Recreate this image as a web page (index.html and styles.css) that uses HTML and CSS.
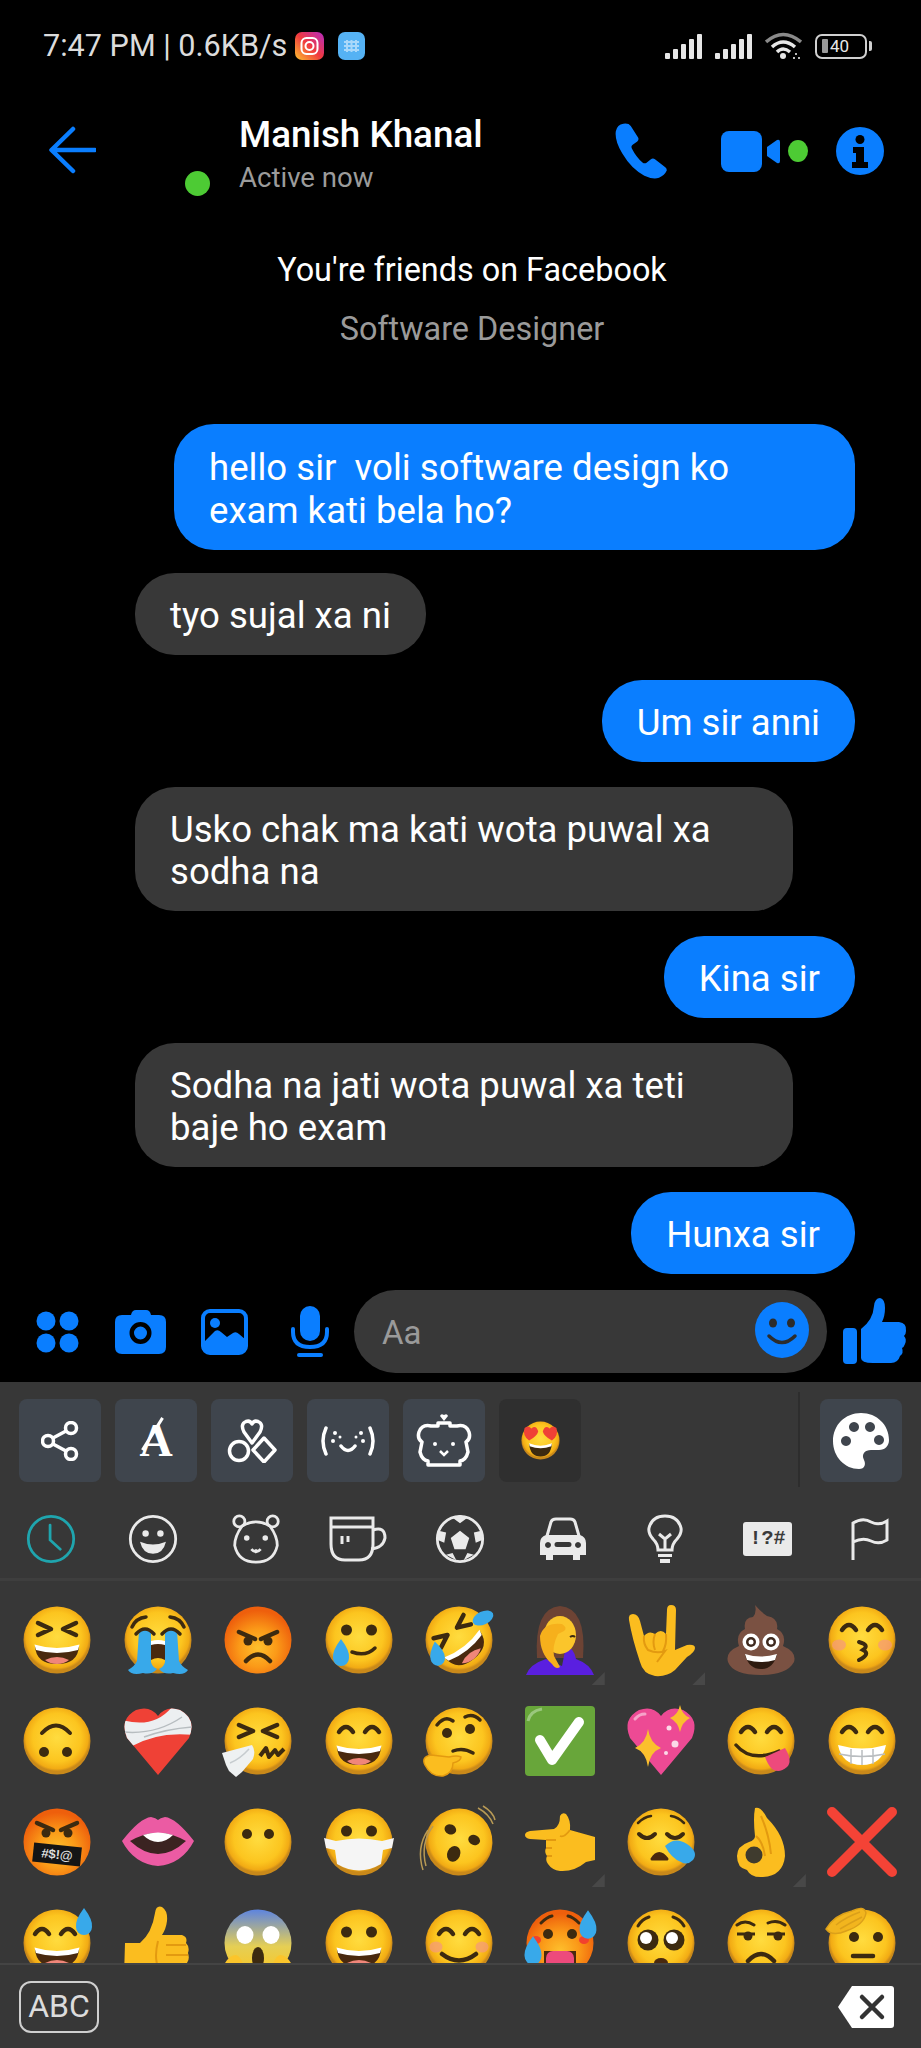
FILE: index.html
```html
<!DOCTYPE html>
<html lang="en">
<head>
<meta charset="utf-8">
<title>Messenger chat</title>
<link rel="stylesheet" href="styles.css">
</head>
<body>
<svg class="defs" aria-hidden="true">
  <defs>
    <radialGradient id="y" cx="50%" cy="45%" r="50%"><stop offset="0" stop-color="#ffdc3f"/><stop offset=".72" stop-color="#fcc51f"/><stop offset=".93" stop-color="#f2ab14"/><stop offset="1" stop-color="#c9891a"/></radialGradient>
    <radialGradient id="o" cx="50%" cy="62%" r="56%"><stop offset="0" stop-color="#fdc02d"/><stop offset=".5" stop-color="#fb9a18"/><stop offset="1" stop-color="#ee5f0c"/></radialGradient>
    <linearGradient id="sc" x1="0" y1="0" x2="0" y2="1"><stop offset="0" stop-color="#5d84e0"/><stop offset=".55" stop-color="#e5cf55"/><stop offset="1" stop-color="#fcc51f"/></linearGradient>
    <linearGradient id="ig" x1="0" y1="1" x2="1" y2="0"><stop offset="0" stop-color="#fdc12e"/><stop offset=".5" stop-color="#f0393f"/><stop offset="1" stop-color="#b52bc4"/></linearGradient>
    <clipPath id="hc"><path d="M36 70 L5 33 Q-3 14 14 5 Q28 0 36 11 Q44 0 58 5 Q75 14 67 33Z"/></clipPath>
    <g id="f"><circle cx="36" cy="36" r="33.5" fill="url(#y)"/></g>
    <g id="fo"><circle cx="36" cy="36" r="33.5" fill="url(#o)"/></g>
    <g id="m"><path d="M14 42 Q36 49 58 42 Q57 60 36 60 Q15 60 14 42Z" fill="#49290f"/><path d="M13.5 40.500 Q36 47.500 58.500 40.500 L57 46 Q36 52 15 46Z" fill="#fff"/><path d="M24 56 Q36 50 48 56 Q43 60 36 60 Q29 60 24 56Z" fill="#f0867a"/></g>
    <g id="ae" fill="none" stroke="#3c2a10" stroke-width="4.500" stroke-linecap="round"><path d="M16 27 Q23 17 30 27"/><path d="M42 27 Q49 17 56 27"/></g>
    <g id="de" fill="#3c2a10"><circle cx="23.500" cy="25" r="5.500"/><circle cx="48.500" cy="25" r="5.500"/></g>
    <path id="drop" d="M0 -14 Q9 -2 8 5 A8 8 0 0 1 -8 5 Q-9 -2 0 -14Z" fill="#38a9ea"/>
  </defs>
</svg>

<div class="phone">
  <div class="status">
    <span class="clock-text">7:47 PM | 0.6KB/s</span>
    <svg class="s-insta" viewBox="0 0 29 28"><rect width="29" height="28" rx="7" fill="url(#ig)"/><rect x="6.500" y="6" width="16" height="16" rx="5" fill="none" stroke="#fff" stroke-width="2"/><circle cx="14.500" cy="14" r="4" fill="none" stroke="#fff" stroke-width="2"/></svg>
    <svg class="s-keys" viewBox="0 0 27 28"><rect width="27" height="28" rx="7" fill="#55b2f4"/><path d="M6 10h15M6 14h15M6 18h15M9 8v12M13.500 8v12M18 8v12" stroke="#a9d8fa" stroke-width="2"/></svg>
    <div class="s-right">
      <svg class="s-sig" viewBox="0 0 38 25"><rect x="0" y="19" width="5" height="6" rx="1" fill="#e6e6e6"/><rect x="8" y="15" width="5" height="10" rx="1" fill="#e6e6e6"/><rect x="16" y="10" width="5" height="15" rx="1" fill="#e6e6e6"/><rect x="24" y="5" width="5" height="20" rx="1" fill="#e6e6e6"/><rect x="32" y="0" width="5" height="25" rx="1" fill="#e6e6e6"/></svg>
      <svg class="s-sig" viewBox="0 0 38 25"><rect x="0" y="19" width="5" height="6" rx="1" fill="#e6e6e6"/><rect x="8" y="15" width="5" height="10" rx="1" fill="#e6e6e6"/><rect x="16" y="10" width="5" height="15" rx="1" fill="#e6e6e6"/><rect x="24" y="5" width="5" height="20" rx="1" fill="#e6e6e6"/><rect x="32" y="0" width="5" height="25" rx="1" fill="#e6e6e6"/></svg>
      <svg class="s-wifi" viewBox="0 0 37 28"><path d="M1 10 Q18 -5 36 10" fill="none" stroke="#8a8a8a" stroke-width="3.500"/><path d="M7 15 Q18 5 30 15" fill="none" stroke="#e6e6e6" stroke-width="3.500"/><path d="M12 20 Q18 14 25 20" fill="none" stroke="#e6e6e6" stroke-width="3.500"/><circle cx="18" cy="24" r="3" fill="#e6e6e6"/><path d="M28 26h2M33 26h2M30 22h2" stroke="#bbb" stroke-width="2"/></svg>
      <div class="s-batt"><div class="s-cell"><span class="s-fill"></span><span class="s-num">40</span></div><span class="s-nub"></span></div>
    </div>
  </div>

  <div class="header">
    <svg class="back" viewBox="0 0 48 48"><path d="M47 24H4M25 3 3.500 24 25 45" fill="none" stroke="#0a7eff" stroke-width="4.500" stroke-linecap="round" stroke-linejoin="round"/></svg>
    <div class="avatar"><span class="avatar-dot"></span></div>
    <div class="who">
      <div class="name">Manish Khanal</div>
      <div class="active">Active now</div>
    </div>
    <div class="actions">
      <svg class="call" viewBox="3.500 1 19.500 22" preserveAspectRatio="none"><path fill="#0a7eff" d="M6.600 1.300 Q4.300 1.700 3.800 4.200 Q3.300 8 6.200 13 Q9.500 19 14.300 21.700 Q17.500 23.300 19.700 22.500 Q21.800 21.500 22.500 19.800 Q22.700 19 22 18.400 L18.200 15.200 Q17.400 14.700 16.600 15.300 L15 16.700 Q14.300 17.100 13.600 16.500 Q11.300 14.400 9.700 11 Q9.300 10 10 9.500 L11.700 8.300 Q12.400 7.600 12 6.700 L9.300 2.200 Q8.500 1 6.600 1.300Z"/></svg>
      <svg class="video" viewBox="0 0 59 41"><rect x="0" y="0" width="41" height="41" rx="8" fill="#0a7eff"/><path d="M46 16 L56 9 Q59 8 59 11 V30 Q59 33 56 32 L46 25Z" fill="#0a7eff"/></svg>
      <span class="call-dot"></span>
      <svg class="info" viewBox="0 0 48 48"><circle cx="24" cy="24" r="24" fill="#0a7eff"/><circle cx="24" cy="12.500" r="4.500" fill="#000"/><path d="M17 20h11v15h4v6H16v-6h4V26h-3Z" fill="#000"/></svg>
    </div>
  </div>

  <div class="intro">
    <div class="friends">You're friends on Facebook</div>
    <div class="job">Software Designer</div>
  </div>

  <div class="thread">
    <div class="bubble me wide">hello sir&nbsp; voli software design ko<br>exam kati bela ho?</div>
    <div class="bubble them">tyo sujal xa ni</div>
    <div class="bubble me">Um sir anni</div>
    <div class="bubble them wide2">Usko chak ma kati wota puwal xa sodha na</div>
    <div class="bubble me">Kina sir</div>
    <div class="bubble them wide2">Sodha na jati wota puwal xa teti baje ho exam</div>
    <div class="bubble me">Hunxa sir</div>
  </div>

  <div class="composer">
    <svg class="c-grid" viewBox="0 0 43 42"><circle cx="10" cy="10" r="9.500" fill="#0a7eff"/><circle cx="33" cy="10" r="9.500" fill="#0a7eff"/><circle cx="10" cy="32" r="9.500" fill="#0a7eff"/><circle cx="33" cy="32" r="9.500" fill="#0a7eff"/></svg>
    <svg class="c-cam" viewBox="0 0 51 44"><path fill="#0a7eff" fill-rule="evenodd" d="M16 5 Q17 0 21 0H31Q35 0 36 5H44Q51 5 51 12V37Q51 44 44 44H7Q0 44 0 37V12Q0 5 7 5ZM25.500 12A11 11 0 1 0 25.500 34A11 11 0 1 0 25.500 12ZM25.500 16.500A6.500 6.500 0 1 1 25.500 29.500A6.500 6.500 0 1 1 25.500 16.500Z"/></svg>
    <svg class="c-img" viewBox="0 0 47 46"><rect x="2" y="2" width="43" height="42" rx="7" fill="none" stroke="#0a7eff" stroke-width="4"/><circle cx="14" cy="14" r="5" fill="#0a7eff"/><path d="M2 34 L14 22 Q17 20 20 23 L26 28 L32 24 Q35 22 38 25 L45 31 V38 Q45 44 39 44 H8 Q2 44 2 38Z" fill="#0a7eff"/></svg>
    <svg class="c-mic" viewBox="0 0 38 51"><rect x="9" y="0" width="20" height="35" rx="10" fill="#0a7eff"/><path d="M2 23 V26 Q2 41 19 41 Q36 41 36 26 V23" fill="none" stroke="#0a7eff" stroke-width="4" stroke-linecap="round"/><path d="M8 49h22" stroke="#0a7eff" stroke-width="4" stroke-linecap="round"/></svg>
    <div class="pill">
      <span class="aa">Aa</span>
      <svg class="c-smile" viewBox="0 0 54 56"><ellipse cx="27" cy="28" rx="27" ry="28" fill="#0a7eff"/><ellipse cx="18" cy="21" rx="4" ry="4.500" fill="#2c2c2c"/><ellipse cx="36" cy="21" rx="4" ry="4.500" fill="#2c2c2c"/><path d="M14 34 Q27 47 40 34" fill="none" stroke="#2c2c2c" stroke-width="3.500" stroke-linecap="round"/></svg>
    </div>
    <svg class="c-thumb" viewBox="0 0 64 66"><rect x="0" y="30" width="14" height="36" rx="4" fill="#0a7eff"/><path fill="#0a7eff" d="M18 31 Q30 22 31 8 Q32 0 37 0 Q42 1 42 10 Q42 18 39 24 H56 Q64 25 63 33 Q63 36 61 38 Q64 41 62 46 Q61 49 59 50 Q61 55 57 58 Q55 65 48 65 H30 Q18 65 18 60Z"/></svg>
  </div>

  <div class="keyboard">
    <div class="toolbar">
      <div class="tile"><svg class="t-share" viewBox="0 0 38 40"><g fill="none" stroke="#fff" stroke-width="3.500"><circle cx="30" cy="7" r="5.500"/><circle cx="7" cy="20" r="5.500"/><circle cx="30" cy="33" r="5.500"/><path d="M12 17 25 10M12 23 25 30"/></g></svg></div>
      <div class="tile"><span class="t-a">A</span></div>
      <div class="tile"><svg class="t-knot" viewBox="0 0 50 44"><g fill="none" stroke="#fff" stroke-width="3.500" stroke-linejoin="round"><path d="M25 24 L17 13 Q13 5 19 2.500 Q23 1 25 5 Q27 1 31 2.500 Q37 5 33 13Z"/><circle cx="12" cy="32" r="9.500"/><path d="M37 19 48 31 37 43 26 31Z"/></g></svg></div>
      <div class="tile"><svg class="t-kao" viewBox="0 0 56 30"><g fill="none" stroke="#fff" stroke-width="3.500" stroke-linecap="round"><path d="M6 2 Q0 15 6 28M50 2 Q56 15 50 28M21 20 Q28 29 35 20"/></g><g fill="#fff"><circle cx="15" cy="7" r="2"/><circle cx="13" cy="15" r="2"/><circle cx="41" cy="7" r="2"/><circle cx="43" cy="15" r="2"/><circle cx="20" cy="11" r="1.500"/><circle cx="36" cy="11" r="1.500"/></g></svg></div>
      <div class="tile"><svg class="t-bear" viewBox="0 0 56 58"><g fill="none" stroke="#fff" stroke-width="3.500" stroke-linejoin="round"><path d="M15 14 H22 V11 H34 V14 H41 Q50 12 53 20 Q55 27 50 30 L52 40 Q50 48 44 49 V53 H12 V49 Q6 48 4 40 L6 30 Q1 27 3 20 Q6 12 15 14Z"/></g><path d="M28 9 L24 4 Q25 1 28 3 Q31 1 32 4Z" fill="#fff"/><g fill="#fff"><circle cx="19" cy="32" r="2"/><circle cx="37" cy="32" r="2"/></g><path d="M24 39 28 43 32 39" fill="none" stroke="#fff" stroke-width="2.500"/></svg></div>
      <div class="tile tile-dark"><svg class="em-small" viewBox="0 0 72 72"><use href="#f"/><path d="M12 14 Q18 8 24 15 Q32 8 36 20 Q34 28 20 36 Q8 28 12 14Z" fill="#ef4136" transform="translate(-4,0)"/><path d="M60 14 Q54 8 48 15 Q40 8 36 20 Q38 28 52 36 Q64 28 60 14Z" fill="#ef4136" transform="translate(4,0)"/><path d="M16 42 Q36 50 56 42 Q54 64 36 64 Q18 64 16 42Z" fill="#3c2a10"/><path d="M16 41 Q36 49 56 41 L55 46 Q36 53 17 46Z" fill="#fff"/></svg></div>
      <div class="divider"></div>
      <div class="tile"><svg class="t-pal" viewBox="0 0 56 56"><path fill="#fff" fill-rule="evenodd" d="M28 0 C12 0 0 12 0 28 C0 44 12 56 26 56 C32 56 33 51 31 47 C28 41 32 37 38 37 H46 C52 37 56 33 56 27 C56 12 44 0 28 0ZM13 23a5 5 0 1 0 .01 0ZM21 9a5 5 0 1 0 .01 0ZM37 9a5 5 0 1 0 .01 0ZM46 22a5 5 0 1 0 .01 0Z"/></svg></div>
    </div>

    <div class="cats">
      <svg class="cat" viewBox="0 0 54 54"><g fill="none" stroke="#1fa5ae" stroke-width="3"><circle cx="27" cy="27" r="24.500"/><path d="M26 12V28L37 38" stroke-linecap="round"/></g></svg>
      <svg class="cat" viewBox="0 0 54 54"><g fill="none" stroke="#eaeaea" stroke-width="3"><circle cx="27" cy="27" r="24.500"/></g><circle cx="19" cy="21" r="3.500" fill="#eaeaea"/><circle cx="35" cy="21" r="3.500" fill="#eaeaea"/><path d="M13 30 Q27 36 41 30 Q38 43 27 43 Q16 43 13 30Z" fill="#eaeaea"/></svg>
      <svg class="cat" viewBox="0 0 54 54"><g fill="none" stroke="#eaeaea" stroke-width="3"><circle cx="9" cy="8" r="6"/><circle cx="45" cy="8" r="6"/><path d="M12 13 Q27 4 42 13 Q50 24 50 34 Q46 52 27 52 Q8 52 4 34 Q4 24 12 13Z"/><path d="M22 38 Q27 44 32 38M27 38v3"/></g><circle cx="17" cy="26" r="3" fill="#eaeaea"/><circle cx="37" cy="26" r="3" fill="#eaeaea"/></svg>
      <svg class="cat-cup" viewBox="0 0 58 46"><g fill="none" stroke="#eaeaea" stroke-width="3"><path d="M2 2H44V28Q44 44 30 44H16Q2 44 2 28Z"/><path d="M2 11H44M44 14 Q56 10 56 22 Q54 32 42 33M13 20V28M19 20V26"/></g></svg>
      <svg class="cat" viewBox="0 0 54 54"><circle cx="27" cy="27" r="24.500" fill="none" stroke="#eaeaea" stroke-width="3"/><path fill="#eaeaea" d="M27 18 37 26 33 38H21L17 26ZM19 4 27 10 35 4 27 1ZM4 18 12 20 10 31 3 28ZM50 18 42 20 44 31 51 28ZM12 44 19 42 23 50ZM42 44 35 42 31 50Z"/></svg>
      <svg class="cat-car" viewBox="0 0 48 44"><path fill="none" stroke="#eaeaea" stroke-width="3" d="M8 19 L12 5 Q13 2 17 2H31Q35 2 36 5L40 19"/><path fill="#eaeaea" fill-rule="evenodd" d="M7 18H41Q47 20 47 26V38H41V43H34V38H14V43H7V38H1V26Q1 20 7 18ZM9 25a3 3 0 1 0 .01 0ZM39 25a3 3 0 1 0 .01 0ZM18 25a2 2 0 0 0 0 5H30a2 2 0 0 0 0-5Z"/></svg>
      <svg class="cat-bulb" viewBox="0 0 36 50"><g fill="none" stroke="#eaeaea" stroke-width="3"><path d="M11 36 Q11 30 6 25 Q1 19 2 14 Q5 2 18 2 Q31 2 34 14 Q35 19 30 25 Q25 30 25 36Z"/><path d="M12 20 18 25 24 20M18 25V36"/></g><rect x="11" y="40" width="14" height="3" fill="#eaeaea"/><rect x="13" y="45" width="10" height="4" fill="#eaeaea"/></svg>
      <span class="cat-tag">!?#</span>
      <svg class="cat-flag" viewBox="0 0 38 42"><path fill="none" stroke="#eaeaea" stroke-width="3" d="M2 42V5 Q12 -1 20 4 Q28 8 36 3 V22 Q28 27 20 23 Q12 19 2 24"/></svg>
    </div>

    <div class="emoji-grid">
      <!-- row 1 -->
      <div class="cell"><svg class="em" viewBox="0 0 72 72"><use href="#f"/><path d="M17 19 30 25 17 31M55 19 42 25 55 31" fill="none" stroke="#3c2a10" stroke-width="4.500" stroke-linecap="round" stroke-linejoin="round"/><use href="#m"/></svg></div>
      <div class="cell"><svg class="em" viewBox="0 0 72 72"><use href="#f"/><path d="M10 23 Q14 14 24 13M62 23 Q58 14 48 13" fill="none" stroke="#3c2a10" stroke-width="3.500" stroke-linecap="round"/><path id="tr" d="M17 27 Q23 23 29 27 L29 58 Q30 63 35 65 Q30 71 21 69 Q10 72 6 66 Q13 62 15 57Z" fill="#38a9ea"/><use href="#tr" transform="translate(72,0) scale(-1,1)"/><path d="M14 30 Q23 20 32 30M58 30 Q49 20 40 30" fill="none" stroke="#3c2a10" stroke-width="3.500" stroke-linecap="round"/><path d="M29 38 Q36 36 43 38 V56 Q36 52 29 56Z" fill="#49290f"/><path d="M29 37 Q36 35 43 37 V41 Q36 39 29 41Z" fill="#fff"/></svg></div>
      <div class="cell"><svg class="em" viewBox="0 0 72 72"><use href="#fo"/><path d="M17 28 33 35M55 28 39 35" stroke="#3c2a10" stroke-width="4.500" stroke-linecap="round"/><circle cx="26" cy="37" r="4.500" fill="#3c2a10"/><circle cx="46" cy="37" r="4.500" fill="#3c2a10"/><path d="M24 57 Q36 44 48 57" fill="none" stroke="#3c2a10" stroke-width="4.500" stroke-linecap="round"/></svg></div>
      <div class="cell"><svg class="em" viewBox="0 0 72 72"><use href="#f"/><use href="#de" transform="translate(0,1)"/><path d="M29 48 Q43 53 52 44" fill="none" stroke="#3c2a10" stroke-width="3.500" stroke-linecap="round"/><use href="#drop" transform="translate(18,49)"/></svg></div>
      <div class="cell"><svg class="em" viewBox="0 0 72 72"><use href="#f"/><g transform="rotate(-38 36 36)"><path d="M17 19 30 25 17 31M55 19 42 25 55 31" fill="none" stroke="#3c2a10" stroke-width="4.500" stroke-linecap="round" stroke-linejoin="round"/><use href="#m"/></g><ellipse cx="60" cy="14" rx="11" ry="6.500" fill="#38a9ea" transform="rotate(-25 60 14)"/><use href="#drop" transform="translate(14,50) rotate(-10) scale(.9)"/></svg></div>
      <div class="cell tone"><svg class="em" viewBox="0 0 72 72"><path d="M13 54 Q10 4 36 2 Q63 4 59 54Z" fill="#6d4334"/><path d="M2 71 Q6 60 22 55 L28 58 L38 62 L42 42 Q50 44 52 55 Q66 60 70 71Z" fill="#5a1fe0"/><ellipse cx="36" cy="31" rx="16" ry="19" fill="#fbc52b"/><path d="M16 32 Q20 18 38 20 Q44 24 40 27 L34 30 Q28 42 30 52 L36 63 Q32 66 28 60 Q16 50 16 32Z" fill="#f6b01c"/><path d="M46 33 Q49 31 51 33" stroke="#3c2a10" stroke-width="2" fill="none"/></svg></div>
      <div class="cell tone"><svg class="em" viewBox="0 0 72 72"><path fill="#fbbd1f" d="M4 16 Q3 10 8 10 Q13 10 15 17 L19 32 Q24 26 30 30 Q36 24 41 30 L42 6 Q42 1 46 1 Q51 1 51 6 L50 46 L62 41 Q70 40 70 44 Q70 48 62 53 L50 66 Q42 73 30 72 Q18 70 15 58 Q7 34 4 16Z"/><path d="M30 30 Q27 38 30 46M41 30 Q42 40 38 47M19 32 Q18 40 23 46 Q32 50 40 47 L32 58" fill="none" stroke="#e39a10" stroke-width="2"/></svg></div>
      <div class="cell"><svg class="em" viewBox="0 0 72 72"><path fill="#7a5142" d="M30 1 Q36 8 42 12 Q54 14 52 25 Q62 30 58 42 Q72 48 69 58 Q62 71 36 71 Q8 71 3 58 Q0 48 14 42 Q10 30 20 25 Q18 14 28 13 Q32 8 30 1Z"/><circle cx="26" cy="38" r="8.500" fill="#fff"/><circle cx="26" cy="38" r="5" fill="#3f2a1f"/><circle cx="26" cy="38" r="2.500" fill="#fff"/><circle cx="46" cy="38" r="8.500" fill="#fff"/><circle cx="46" cy="38" r="5" fill="#3f2a1f"/><circle cx="46" cy="38" r="2.500" fill="#fff"/><path d="M20 51 Q36 56 52 51 Q48 65 36 65 Q24 65 20 51Z" fill="#2e1b10"/><path d="M20 50 Q36 55 52 50 L50 56 Q36 60 22 56Z" fill="#fff"/></svg></div>
      <div class="cell"><svg class="em" viewBox="0 0 72 72"><use href="#f"/><use href="#ae" transform="translate(0,-1)"/><ellipse cx="13" cy="41" rx="7" ry="5.500" fill="#f5987e" opacity=".7"/><ellipse cx="59" cy="41" rx="7" ry="5.500" fill="#f5987e" opacity=".7"/><path d="M33 38 Q44 41 37 46 Q45 50 33 56" fill="none" stroke="#3c2a10" stroke-width="4" stroke-linecap="round"/></svg></div>
      <!-- row 2 -->
      <div class="cell"><svg class="em" viewBox="0 0 72 72"><use href="#f"/><circle cx="23" cy="47" r="5" fill="#3c2a10"/><circle cx="46" cy="47" r="5" fill="#3c2a10"/><path d="M21 28 Q35 13 49 28" fill="none" stroke="#3c2a10" stroke-width="4" stroke-linecap="round"/></svg></div>
      <div class="cell"><svg class="em" viewBox="0 0 72 72"><path d="M36 70 L5 33 Q-3 14 14 5 Q28 0 36 11 Q44 0 58 5 Q75 14 67 33Z" fill="#ef4136"/><g clip-path="url(#hc)"><path d="M0 15 Q32 24 50 2 L72 6 V30 Q36 26 8 42 L0 36Z" fill="#eceff1"/><path d="M1 27 Q34 30 60 12M22 32 Q44 24 70 22" fill="none" stroke="#b7bdc0" stroke-width="1.500"/></g></svg></div>
      <div class="cell"><svg class="em" viewBox="0 0 72 72"><use href="#f"/><path d="M17 20 31 26 17 32M55 20 41 26 55 32" fill="none" stroke="#3c2a10" stroke-width="4.500" stroke-linecap="round" stroke-linejoin="round"/><path d="M38 51 44 43 47 52 53 45 56 50 62 44" fill="none" stroke="#3c2a10" stroke-width="4" stroke-linejoin="round"/><path d="M0 48 L30 40 Q34 46 31 54 L20 67 L14 72 L7 66 L4 60 Z" fill="#eef1f2"/><path d="M8 58 Q18 54 27 44" fill="none" stroke="#c6cccf" stroke-width="1.500"/></svg></div>
      <div class="cell"><svg class="em" viewBox="0 0 72 72"><use href="#f"/><use href="#ae"/><use href="#m"/></svg></div>
      <div class="cell"><svg class="em" viewBox="0 0 72 72"><use href="#f"/><circle cx="24" cy="28" r="5" fill="#3c2a10"/><circle cx="47" cy="24" r="5" fill="#3c2a10"/><path d="M14 20 Q22 10 30 16M42 12 Q50 8 57 15" fill="none" stroke="#3c2a10" stroke-width="3.500" stroke-linecap="round"/><path d="M30 46 Q40 42 50 48" fill="none" stroke="#3c2a10" stroke-width="3.500" stroke-linecap="round"/><path d="M2 60 Q-2 52 8 50 L26 52 Q34 50 38 52 Q38 56 30 58 Q30 68 20 71 Q8 72 2 60Z" fill="#fbbd1f" stroke="#e39a10" stroke-width="1.500"/></svg></div>
      <div class="cell"><svg class="em" viewBox="0 0 72 72"><rect x="1" y="1" width="70" height="70" rx="4" fill="#68a63a"/><path d="M4 16 Q6 6 18 4" stroke="#9ac77d" stroke-width="3" fill="none"/><path d="M16 35 L28 55 L55 17" fill="none" stroke="#fff" stroke-width="10" stroke-linecap="round" stroke-linejoin="round"/></svg></div>
      <div class="cell"><svg class="em" viewBox="0 0 72 72"><path d="M36 70 L5 33 Q-3 14 14 5 Q28 0 36 11 Q44 0 58 5 Q75 14 67 33Z" fill="#ed4a94"/><path d="M10 14 Q14 9 20 9" stroke="#f6a3c9" stroke-width="3" fill="none" stroke-linecap="round"/><path fill="#fbc02d" d="M23 24 Q25 38 36 43 Q25 47 23 62 Q21 47 10 43 Q21 38 23 24ZM55 0 Q57 10 65 13 Q57 17 55 27 Q53 17 45 13 Q53 10 55 0Z"/><circle cx="44" cy="23" r="2.500" fill="#fbd9e8"/><circle cx="50" cy="39" r="3.500" fill="#fbd9e8"/><circle cx="41" cy="48" r="2" fill="#fbd9e8"/></svg></div>
      <div class="cell"><svg class="em" viewBox="0 0 72 72"><use href="#f"/><use href="#ae"/><path d="M11 40 Q26 58 54 46" fill="none" stroke="#3c2a10" stroke-width="3.500" stroke-linecap="round"/><path d="M40 52 L60 43 Q68 56 62 62 Q54 69 47 64 Q43 60 40 52Z" fill="#ed4a7c"/></svg></div>
      <div class="cell"><svg class="em" viewBox="0 0 72 72"><use href="#f"/><use href="#ae"/><path d="M12 40 Q36 47 60 40 Q56 60 36 60 Q16 60 12 40Z" fill="#fff"/><path d="M13 49 Q36 54 59 49M25 44V59M36 45V60M47 44V59" fill="none" stroke="#b9bdc0" stroke-width="1.500"/></svg></div>
      <!-- row 3 -->
      <div class="cell"><svg class="em" viewBox="0 0 72 72"><use href="#fo"/><path d="M16 17 32 24M56 17 40 24" stroke="#3c2a10" stroke-width="4.500" stroke-linecap="round"/><circle cx="25" cy="27" r="4.500" fill="#3c2a10"/><circle cx="47" cy="27" r="4.500" fill="#3c2a10"/><g transform="rotate(6 36 49)"><rect x="12" y="39" width="48" height="19" fill="#151515"/><text x="36" y="53" class="curse">#$!@</text></g></svg></div>
      <div class="cell"><svg class="em" viewBox="0 0 72 72"><path d="M0 35 Q18 12 29 11 Q34 12 36 14 Q38 12 43 11 Q54 12 72 35 Q60 58 36 60 Q12 58 0 35Z" fill="#eb5ba3"/><path d="M8 35 Q24 26 36 27 Q48 26 64 35 Q50 48 36 48 Q22 48 8 35Z" fill="#3b2321"/><path d="M21 29 Q36 24 51 29 Q44 36 36 36 Q28 36 21 29Z" fill="#fff"/></svg></div>
      <div class="cell"><svg class="em" viewBox="0 0 72 72"><use href="#f"/><circle cx="25" cy="28" r="5" fill="#3c2a10"/><circle cx="47" cy="28" r="5" fill="#3c2a10"/></svg></div>
      <div class="cell"><svg class="em" viewBox="0 0 72 72"><use href="#f"/><use href="#de"/><path d="M1 32 L13 35 Q36 30 59 35 L71 32 L69 42 L60 44 L58 58 Q36 71 14 58 L12 44 L3 42Z" fill="#f5f5f5"/></svg></div>
      <div class="cell"><svg class="em" viewBox="0 0 72 72"><g transform="rotate(24 36 36)"><use href="#f"/><ellipse cx="23" cy="28" rx="6" ry="5" fill="#3c2a10"/><ellipse cx="49" cy="28" rx="6" ry="5" fill="#3c2a10"/><ellipse cx="36" cy="49" rx="6.500" ry="8" fill="#3c2a10"/></g><path d="M9 8 Q-4 26 2 48 M4 12 Q-8 30 -1 52" transform="translate(1,12)" fill="none" stroke="#b89a55" stroke-width="1.500"/><path d="M55 2 Q66 8 70 18M60 0 Q70 6 72 14" fill="none" stroke="#b89a55" stroke-width="1.500"/></svg></div>
      <div class="cell tone"><svg class="em" viewBox="0 0 72 72"><path fill="#fbbd1f" d="M1 29 Q1 26 6 25 L30 23 Q36 20 36 10 Q38 6 42 8 Q47 14 46 24 L71 31 V54 L62 56 Q50 66 36 65 Q28 64 24 58 Q21 54 23 50 Q20 46 22 42 L22 34 L6 33 Q1 32 1 29Z"/><path d="M22 34H32M22 42H28M23 50H28M46 24 Q40 32 36 30" fill="none" stroke="#e39a10" stroke-width="1.800"/></svg></div>
      <div class="cell"><svg class="em" viewBox="0 0 72 72"><use href="#f"/><path d="M13 17 Q19 11 26 10M59 17 Q53 11 46 10" fill="none" stroke="#3c2a10" stroke-width="2.500" stroke-linecap="round"/><path d="M14 28 Q22 36 30 28M42 28 Q50 36 58 28" fill="none" stroke="#3c2a10" stroke-width="4" stroke-linecap="round"/><path d="M27 53 Q34 42 42 53 Z" fill="#49290f" stroke="#49290f" stroke-width="3" stroke-linejoin="round"/><path d="M40 40 Q50 30 62 38 Q74 46 68 54 Q62 60 56 56 Q46 52 40 40Z" fill="#38a9ea"/></svg></div>
      <div class="cell tone"><svg class="em" viewBox="0 0 72 72"><path fill="#fbbd1f" d="M30 2 Q36 0 42 12 Q60 30 60 50 Q58 70 38 71 Q26 72 22 64 Q12 62 12 50 Q12 40 24 36 Q30 34 30 30 Q28 12 30 2Z"/><circle cx="29" cy="49" r="8.500" fill="#3f3b2e"/><path d="M36 10 Q44 28 46 48M31 30 Q38 36 40 50" fill="none" stroke="#e39a10" stroke-width="2"/></svg></div>
      <div class="cell"><svg class="em" viewBox="0 0 72 72"><path d="M6 6 66 66M66 6 6 66" stroke="#f44336" stroke-width="10" stroke-linecap="round"/></svg></div>
      <!-- row 4 -->
      <div class="cell"><svg class="em" viewBox="0 0 72 72"><use href="#f"/><use href="#ae" transform="translate(-2,0)"/><use href="#m"/><use href="#drop" transform="translate(63,15)"/></svg></div>
      <div class="cell"><svg class="em" viewBox="0 0 72 72"><path fill="#fbbd1f" d="M3 36 H18 Q30 26 33 6 Q34 -2 40 0 Q46 4 45 14 Q44 22 40 28 L60 28 Q66 30 64 36 Q68 40 66 46 Q68 52 65 56 Q66 64 58 68 L30 70 L2 70Z"/><path d="M44 38H64M44 48H66M44 58H65M36 34 Q32 50 36 60" fill="none" stroke="#e39a10" stroke-width="2"/></svg></div>
      <div class="cell"><svg class="em" viewBox="0 0 72 72"><circle cx="36" cy="36" r="33.500" fill="url(#sc)"/><ellipse cx="23" cy="28" rx="8.500" ry="9" fill="#fff"/><ellipse cx="49" cy="28" rx="8.500" ry="9" fill="#fff"/><ellipse cx="36" cy="51" rx="6" ry="11" fill="#3c2a10"/><path d="M0 62 Q6 48 14 48 Q20 50 22 62 L20 72H6ZM72 62 Q66 48 58 48 Q52 50 50 62 L52 72H66Z" fill="#fbc52b"/></svg></div>
      <div class="cell"><svg class="em" viewBox="0 0 72 72"><use href="#f"/><use href="#de"/><use href="#m"/></svg></div>
      <div class="cell"><svg class="em" viewBox="0 0 72 72"><use href="#f"/><use href="#ae"/><ellipse cx="13" cy="40" rx="6.500" ry="5.500" fill="#f5987e" opacity=".7"/><ellipse cx="59" cy="40" rx="6.500" ry="5.500" fill="#f5987e" opacity=".7"/><path d="M19 47 Q36 60 53 47" fill="none" stroke="#3c2a10" stroke-width="4.500" stroke-linecap="round"/></svg></div>
      <div class="cell"><svg class="em" viewBox="0 0 72 72"><circle cx="36" cy="36" r="33.500" fill="url(#o)"/><path d="M17 16 Q23 10 28 9M55 16 Q49 10 44 9" fill="none" stroke="#3c2a10" stroke-width="3" stroke-linecap="round"/><circle cx="24" cy="27" r="5" fill="#3c2a10"/><circle cx="48" cy="27" r="5" fill="#3c2a10"/><ellipse cx="12" cy="33" rx="5" ry="4" fill="#f2412d"/><ellipse cx="60" cy="33" rx="5" ry="4" fill="#f2412d"/><path d="M20 44 H52 V60 H20Z" fill="#49290f"/><rect x="22" y="44" width="28" height="18" rx="7" fill="#ed4a7c"/><use href="#drop" transform="translate(64,18) scale(1.050)"/><use href="#drop" transform="translate(9,44) scale(1.050)"/></svg></div>
      <div class="cell"><svg class="em" viewBox="0 0 72 72"><use href="#f"/><path d="M13 19 Q17 12 24 10M59 19 Q55 12 48 10" fill="none" stroke="#3c2a10" stroke-width="3" stroke-linecap="round"/><circle cx="23" cy="33" r="10.500" fill="#3c2a10"/><circle cx="49" cy="33" r="10.500" fill="#3c2a10"/><circle cx="21" cy="31" r="6" fill="#fff"/><circle cx="47" cy="31" r="6" fill="#fff"/><ellipse cx="36" cy="56" rx="7" ry="5" fill="#49290f"/></svg></div>
      <div class="cell"><svg class="em" viewBox="0 0 72 72"><use href="#f"/><path d="M12 18 Q20 12 29 18M43 16 Q52 12 60 18" fill="none" stroke="#3c2a10" stroke-width="3" stroke-linecap="round"/><path d="M12 27 H30M42 27 H60" stroke="#3c2a10" stroke-width="3"/><circle cx="23" cy="29" r="4.500" fill="#3c2a10"/><circle cx="53" cy="29" r="4.500" fill="#3c2a10"/><path d="M23 54 Q36 40 49 54" fill="none" stroke="#3c2a10" stroke-width="4.500" stroke-linecap="round"/></svg></div>
      <div class="cell"><svg class="em" viewBox="0 0 72 72"><use href="#f"/><circle cx="28" cy="30" r="5" fill="#3c2a10"/><circle cx="52" cy="30" r="5" fill="#3c2a10"/><path d="M27 49 H47" stroke="#3c2a10" stroke-width="4.500" stroke-linecap="round"/><path d="M0 22 Q8 8 26 4 Q38 -2 40 6 Q38 18 20 24 Q6 30 0 22Z" fill="#f2b51e" stroke="#dba01a" stroke-width="1.500"/><path d="M10 18 Q20 10 34 5M14 22 Q24 16 36 10" fill="none" stroke="#dba01a" stroke-width="1.500"/></svg></div>
    </div>

    <div class="bottom">
      <span class="abc">ABC</span>
      <svg class="bksp" viewBox="0 0 56 42"><path d="M14 0H53Q56 0 56 3V39Q56 42 53 42H14L0 21Z" fill="#fff"/><path d="M24 11 44 31M44 11 24 31" stroke="#333" stroke-width="4.500" stroke-linecap="round"/></svg>
    </div>
  </div>
</div>
</body>
</html>
```

FILE: styles.css
```css
* { box-sizing: border-box; }
html, body { margin: 0; padding: 0; background: #000; }
body { font-family: Roboto, "Liberation Sans", sans-serif; }
svg { display: block; flex: none; }
.defs { width: 0; height: 0; }

.phone { width: 921px; height: 2048px; background: #000; display: flex; flex-direction: column; overflow: hidden; }

/* status bar */
.status { height: 92px; flex: none; display: flex; align-items: center; padding: 0 49px 0 43px; color: #dcdcdc; }
.clock-text { font-size: 30.6px; line-height: 40px; width: 252px; white-space: nowrap; }
.s-insta { width: 29px; height: 28px; }
.s-keys { width: 27px; height: 28px; margin-left: 14px; }
.s-right { margin-left: auto; display: flex; align-items: center; }
.s-sig { width: 38px; height: 25px; margin-right: 12px; }
.s-wifi { width: 37px; height: 28px; margin-right: 13px; }
.s-batt { display: flex; align-items: center; gap: 2px; }
.s-cell { width: 52px; height: 25px; border: 2.5px solid #d0d0d0; border-radius: 7px; display: flex; align-items: center; padding-left: 5px; gap: 2px; }
.s-fill { width: 6px; height: 14px; background: #9a9a9a; border-radius: 1px; }
.s-num { font-size: 17px; line-height: 18px; color: #e8e8e8; }
.s-nub { width: 3px; height: 10px; background: #d0d0d0; border-radius: 0 2px 2px 0; }

/* header */
.header { height: 118px; flex: none; display: flex; align-items: center; padding: 0 37px 0 48px; }
.back { width: 48px; height: 48px; margin-top: -2px; }
.avatar { width: 143px; align-self: stretch; position: relative; }
.avatar-dot { position: absolute; left: 89px; top: 79px; width: 25px; height: 25px; border-radius: 50%; background: #4dcb34; }
.who { padding-top: 9px; }
.name { font-size: 36.8px; line-height: 43px; font-weight: 500; color: #fff; white-space: nowrap; }
.active { font-size: 27.6px; line-height: 43px; color: #9b9b9b; white-space: nowrap; }
.actions { margin-left: auto; display: flex; align-items: center; }
.call { width: 53px; height: 56px; margin-right: 53px; margin-left: -3px; }
.video { width: 59px; height: 41px; margin-right: 8px; }
.call-dot { width: 20px; height: 22px; border-radius: 50%; background: #4dcb34; margin-right: 28px; }
.info { width: 48px; height: 48px; }

/* intro */
.intro { margin-top: 31px; padding-left: 23px; text-align: center; }
.friends { font-size: 32.4px; line-height: 59px; color: #fff; }
.job { font-size: 32.4px; line-height: 59px; color: #9a9a9a; }

/* thread */
.thread { margin-top: 65px; padding: 0 66px 0 135px; display: flex; flex-direction: column; gap: 25px; }
.bubble { padding: 22px 35px 18px; border-radius: 40px; font-size: 36.6px; line-height: 42px; color: #fff; }
.me { align-self: flex-end; background: #0a7eff; }
.them { align-self: flex-start; background: #383838; }
.wide { width: 681px; line-height: 43px; margin-bottom: -2px; }
.wide2 { width: 658px; }

/* composer */
.composer { margin-top: 16px; height: 83px; flex: none; display: flex; align-items: center; padding-left: 36px; }
.c-grid { width: 43px; height: 42px; margin-right: 36px; }
.c-cam { width: 51px; height: 44px; margin-right: 35px; }
.c-img { width: 47px; height: 46px; margin-right: 43px; }
.c-mic { width: 38px; height: 51px; margin-right: 25px; }
.pill { width: 473px; height: 83px; border-radius: 42px; background: #383838; display: flex; align-items: center; justify-content: space-between; padding: 0 18px 0 28px; }
.aa { font-size: 33px; color: #9a9a9a; padding-top: 2px; }
.c-smile { width: 54px; height: 56px; margin-top: -4px; }
.c-thumb { width: 64px; height: 66px; margin-left: 16px; margin-top: -2px; }

/* keyboard */
.keyboard { margin-top: 9px; flex: 1; min-height: 0; background: #373737; display: flex; flex-direction: column; }
.toolbar { flex: none; display: flex; gap: 14px; padding: 17px 19px 0; height: 100px; }
.tile { width: 82px; height: 83px; border-radius: 8px; background: #3f454d; display: flex; align-items: center; justify-content: center; }
.tile-dark { background: #2f2f2f; margin-right: auto; }
.divider { width: 2px; height: 95px; margin: -7px 6px 0 0; background: #2d2d2d; }
.t-share { width: 38px; height: 40px; }
.t-a { position: relative; font-family: "Liberation Serif", serif; font-weight: 700; font-size: 46px; line-height: 46px; color: #fff; }
.t-a::after { content: ""; position: absolute; left: 12px; top: -3px; width: 3px; height: 38px; background: #fff; transform: rotate(32deg); }
.t-knot { width: 50px; height: 44px; }
.t-kao { width: 56px; height: 30px; }
.t-bear { width: 56px; height: 58px; }
.em-small { width: 41px; height: 41px; }
.t-pal { width: 56px; height: 56px; }

.cats { flex: none; height: 99px; padding-top: 18px; display: grid; grid-template-columns: repeat(9, 1fr); justify-items: center; align-items: center; border-bottom: 3px solid #3e3e3e; }
.cat { width: 54px; height: 50px; }
.cat-cup { width: 58px; height: 46px; }
.cat-car { width: 48px; height: 44px; }
.cat-bulb { width: 36px; height: 50px; }
.cat-flag { width: 38px; height: 42px; }
.cat-tag { width: 49px; height: 34px; border-radius: 3px; background: #eaeaea; color: #3a3a3a; font-family: "Liberation Mono", monospace; font-weight: 700; font-size: 20px; line-height: 34px; text-align: center; }

.emoji-grid { flex: 1; min-height: 0; overflow: hidden; padding: 8px 9px 0 7px; display: grid; grid-template-columns: repeat(9, 1fr); grid-auto-rows: 101px; align-content: start; }
.cell { position: relative; display: flex; align-items: center; justify-content: center; }
.em { width: 72px; height: 72px; overflow: visible; }
.tone::after { content: ""; position: absolute; left: 82px; top: 83px; width: 13px; height: 13px; background: #484848; clip-path: polygon(100% 0, 100% 100%, 0 100%); }
.curse { font-family: "Liberation Sans", sans-serif; font-weight: 700; font-size: 13px; fill: #ddd; text-anchor: middle; }

.bottom { flex: none; height: 85px; border-top: 2px solid #444; display: flex; align-items: center; justify-content: space-between; padding: 0 27px 0 19px; }
.abc { width: 80px; height: 52px; border: 2.5px solid #cfcfcf; border-radius: 12px; color: #dcdcdc; font-size: 32px; line-height: 47px; text-align: center; }
.bksp { width: 56px; height: 42px; }
```
